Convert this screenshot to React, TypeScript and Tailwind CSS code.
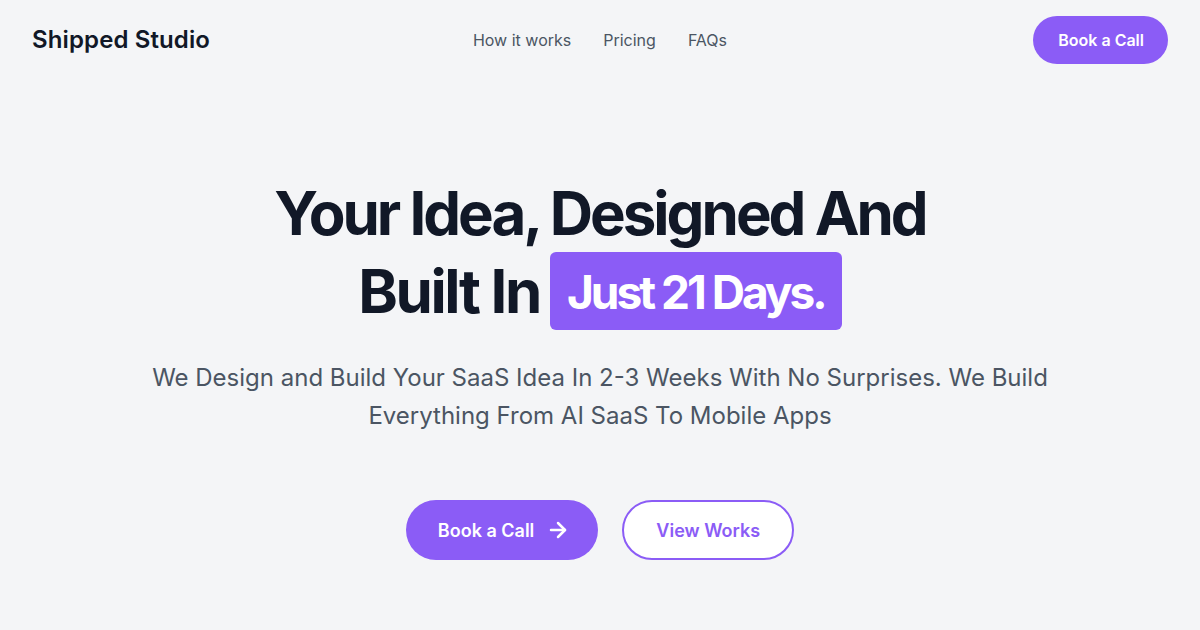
import { ArrowRight } from "lucide-react";

const links = ["How it works", "Pricing", "FAQs"];

export default function App() {
  return (
    <div className="min-h-[630px] w-full bg-[#f4f5f7] font-['Inter','Noto_Sans',sans-serif] text-[#111827]">
      {/* header */}
      <header className="grid h-20 grid-cols-3 items-center px-8">
        <div className="text-[24px] font-semibold tracking-[0.005em]">Shipped Studio</div>
        <nav className="flex items-center justify-center gap-8 text-[16px] text-[#4b5563]">
          {links.map((l) => (
            <a key={l} href="#">
              {l}
            </a>
          ))}
        </nav>
        <div className="flex justify-end">
          <button className="h-12 rounded-full bg-[#8b5cf6] pl-[25px] pr-6 text-[16px] font-semibold text-white">
            Book a Call
          </button>
        </div>
      </header>

      {/* hero */}
      <main className="flex flex-col items-center pt-[94px] text-center">
        <h1 className="text-[60px] font-bold leading-[78px] tracking-[-0.05em]">
          Your Idea, Designed And
          <br />
          <span className="inline-flex items-center gap-[10px] align-top">
            <span className="tracking-[-0.04em]">Built In</span>
            <span className="inline-block h-[78px] rounded-md bg-[#8b5cf6] px-[17px] text-[46px] leading-[80px] tracking-[-0.065em] text-white">
              Just 21 Days.
            </span>
          </span>
        </h1>
        <p className="mt-[29px] max-w-[920px] text-[24px] leading-[38px] text-[#4b5563]">
          We Design and Build Your SaaS Idea In 2-3 Weeks With No Surprises. We Build
          <br />
          Everything From AI SaaS To Mobile Apps
        </p>
        <div className="mt-[65px] flex items-center gap-6">
          <button className="flex h-[60px] items-center gap-3 rounded-full bg-[#8b5cf6] pl-[32px] pr-[28px] text-[18px] font-semibold text-white">
            Book a Call
            <ArrowRight className="h-6 w-6" strokeWidth={2.5} />
          </button>
          <button className="h-[60px] rounded-full border-2 border-[#8b5cf6] bg-white px-[32px] text-[18px] font-semibold text-[#8b5cf6]">
            View Works
          </button>
        </div>
      </main>
    </div>
  );
}
